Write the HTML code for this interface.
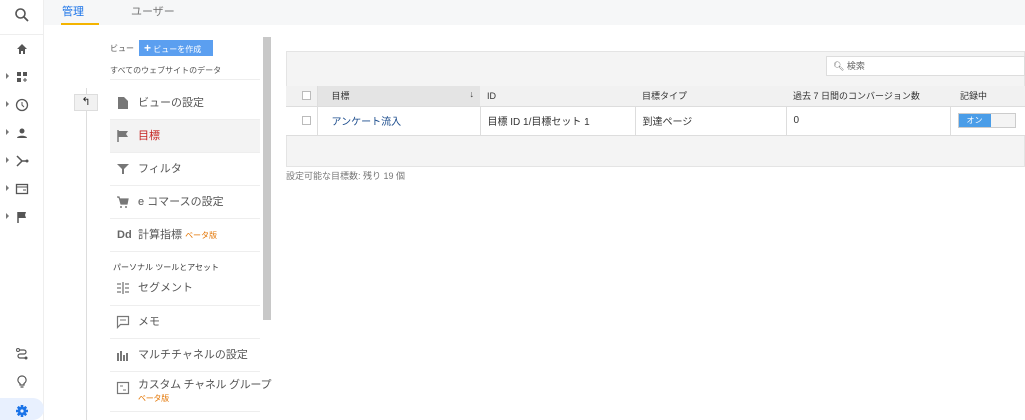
<!DOCTYPE html>
<html><head><meta charset="utf-8"><style>
*{margin:0;padding:0;box-sizing:border-box}
body{width:1025px;height:420px;overflow:hidden;background:#fff;font-family:"Liberation Sans","Noto Sans CJK JP",sans-serif;position:relative;color:#333}
.a{position:absolute}
.side{left:0;top:0;width:44px;height:420px;background:#fff;border-right:1px solid #eee}
.ic{position:absolute;left:14px;width:16px;height:16px}
.tri{position:absolute;left:6px;width:0;height:0;border-left:3px solid #777;border-top:3px solid transparent;border-bottom:3px solid transparent}
.tabs{left:44px;top:0;width:981px;height:25px;background:#f6f7f8}
.nav .it{position:absolute;left:110px;width:150px;height:33px;border-bottom:1px solid #eee;font-size:11px;color:#555;line-height:33px;padding-left:28px;white-space:nowrap}
.nav .it svg{position:absolute;left:6px;top:9px}
.beta{color:#e37400;font-size:8px}
table{border-collapse:collapse;font-size:9px;table-layout:fixed}
td{vertical-align:middle}
</style></head><body>
<div class="a side">
<svg class="ic" style="top:7px" viewBox="0 0 16 16"><circle cx="6.5" cy="6.5" r="4.5" fill="none" stroke="#555" stroke-width="1.6"/><path d="M10 10l4 4" stroke="#555" stroke-width="1.8"/></svg>
<div class="a" style="left:0;top:34px;width:44px;border-top:1px solid #eee"></div>
<svg class="ic" style="top:41px" viewBox="0 0 16 16"><path d="M3 8l5-5 5 5h-2v5H9v-3H7v3H5V8z" fill="#555"/></svg>
<div class="tri" style="top:73px"></div><svg class="ic" style="top:69px" viewBox="0 0 16 16"><rect x="3" y="3" width="4" height="4" fill="#555"/><rect x="9" y="3" width="4" height="4" fill="#555"/><rect x="3" y="9" width="4" height="4" fill="#555"/><path d="M9 11h4M11 9v4" stroke="#555"/></svg>
<div class="tri" style="top:101px"></div><svg class="ic" style="top:97px" viewBox="0 0 16 16"><circle cx="8" cy="8" r="5.5" fill="none" stroke="#555" stroke-width="1.3"/><path d="M8 5v3l2 2" stroke="#555" fill="none"/></svg>
<div class="tri" style="top:129px"></div><svg class="ic" style="top:125px" viewBox="0 0 16 16"><circle cx="8" cy="6" r="2.5" fill="#555"/><path d="M3 13c0-3 10-3 10 0z" fill="#555"/></svg>
<div class="tri" style="top:157px"></div><svg class="ic" style="top:153px" viewBox="0 0 16 16"><path d="M3 3l5 5-5 5M8 8h5" stroke="#555" stroke-width="1.5" fill="none"/><circle cx="13" cy="8" r="1.5" fill="#555"/></svg>
<div class="tri" style="top:185px"></div><svg class="ic" style="top:181px" viewBox="0 0 16 16"><rect x="2.5" y="3.5" width="11" height="9" fill="none" stroke="#555" stroke-width="1.3"/><path d="M2.5 6h11M9 9h3" stroke="#555"/></svg>
<div class="tri" style="top:213px"></div><svg class="ic" style="top:209px" viewBox="0 0 16 16"><path d="M4 3v11" stroke="#555" stroke-width="1.5"/><path d="M4 3h8l-1 3 1 3H4z" fill="#555"/></svg>
<svg class="ic" style="top:346px" viewBox="0 0 16 16"><circle cx="4" cy="4" r="1.5" fill="none" stroke="#555"/><circle cx="12" cy="12" r="1.5" fill="#555"/><path d="M5 4h5a2 2 0 0 1 0 4H6a2 2 0 0 0 0 4h5" stroke="#555" fill="none" stroke-width="1.2"/></svg>
<svg class="ic" style="top:374px" viewBox="0 0 16 16"><path d="M8 2a4 4 0 0 0-2 7.5V11h4V9.5A4 4 0 0 0 8 2zM6.5 13h3" stroke="#555" fill="none" stroke-width="1.2"/></svg>
<div class="a" style="left:0;top:398px;width:44px;height:22px;background:#e8f0fe;border-radius:0 11px 11px 0"></div>
<svg class="ic" style="top:403px" viewBox="0 0 16 16"><g stroke="#1a73e8" stroke-width="2.6"><path d="M8 2v12M2 8h12M3.8 3.8l8.4 8.4M12.2 3.8l-8.4 8.4"/></g><circle cx="8" cy="8" r="4.2" fill="#1a73e8"/><circle cx="8" cy="8" r="1.6" fill="#e8f0fe"/></svg>
</div>
<div class="a tabs">
<div class="a" style="left:18px;top:3px;font-size:11px;color:#1a73e8">管理</div>
<div class="a" style="left:87px;top:3px;font-size:11px;color:#777">ユーザー</div>
<div class="a" style="left:17px;top:23px;width:38px;height:2px;background:#f4b400"></div>
</div>
<div class="nav">
<div class="a" style="left:110px;top:43px;font-size:8px;color:#555">ビュー</div>
<div class="a" style="left:139px;top:40px;width:74px;height:16px;background:#5b9ff0;color:#fff;font-size:8px;line-height:16px;padding-left:5px"><b style="font-size:12px">+</b> ビューを作成</div>
<div class="a" style="left:110px;top:65px;font-size:8px;color:#555">すべてのウェブサイトのデータ</div>
<div class="a" style="left:110px;top:79px;width:150px;border-top:1px solid #eee"></div>
<div class="a" style="left:86px;top:88px;height:332px;border-left:1px solid #ddd"></div>
<div class="a" style="left:74px;top:94px;width:24px;height:17px;background:#f1f1f1;border:1px solid #ddd;font-size:11px;text-align:center;line-height:14px;color:#222">↰</div>
<div class="a" style="left:263px;top:37px;width:8px;height:283px;background:#c8c8c8"></div>
<div class="it" style="top:87px">ビューの設定<svg width="14" height="14" viewBox="0 0 14 14"><path d="M2 1h6l4 4v8H2z" fill="#777"/></svg></div>
<div class="it" style="top:120px;background:#f3f3f3;color:#c5221f">目標<svg width="14" height="14" viewBox="0 0 14 14"><path d="M2 1v12" stroke="#777" stroke-width="1.5"/><path d="M2 2h10l-2 3 2 3H2z" fill="#777"/></svg></div>
<div class="it" style="top:153px">フィルタ<svg width="14" height="14" viewBox="0 0 14 14"><path d="M1 2h12L8 7v5H6V7z" fill="#777"/></svg></div>
<div class="it" style="top:186px">e コマースの設定<svg width="14" height="14" viewBox="0 0 14 14"><path d="M1 2h2l2 7h6l1-5H4" stroke="#777" fill="#777" stroke-width="1.2"/><circle cx="5" cy="12" r="1" fill="#777"/><circle cx="10" cy="12" r="1" fill="#777"/></svg></div>
<div class="it" style="top:219px">計算指標 <span class="beta">ベータ版</span><span style="position:absolute;left:7px;font-weight:bold;color:#666;font-size:11px">Dd</span></div>
<div class="a" style="left:113px;top:262px;font-size:8px;color:#333">パーソナル ツールとアセット</div>
<div class="it" style="top:272px;height:34px">セグメント<svg width="14" height="14" viewBox="0 0 14 14"><path d="M1 3h4M1 7h4M1 11h4M9 3h4M9 7h4M9 11h4M7 1v12" stroke="#777" stroke-width="1.3"/></svg></div>
<div class="it" style="top:306px">メモ<svg width="14" height="14" viewBox="0 0 14 14"><path d="M1.5 1.5h11v8h-8l-3 3z" fill="none" stroke="#777" stroke-width="1.2"/><path d="M4 5h6" stroke="#777"/></svg></div>
<div class="it" style="top:339px">マルチチャネルの設定<svg width="14" height="14" viewBox="0 0 14 14"><path d="M2 5v8M5 3v10M8 7v6M11 5v8" stroke="#777" stroke-width="2"/></svg></div>
<div class="it" style="top:372px;height:40px;line-height:13px;padding-top:7px;letter-spacing:-0.3px">カスタム チャネル グループ<br><span class="beta">ベータ版</span><svg width="14" height="14" viewBox="0 0 14 14"><rect x="1.5" y="1.5" width="11" height="11" fill="none" stroke="#777" stroke-width="1.2"/><path d="M4 5h3M7 9h3" stroke="#777"/></svg></div>
</div>
<div class="a" style="left:286px;top:51px;width:739px;height:116px;background:#f4f4f4;border:1px solid #e4e4e4"></div>
<div class="a" style="left:826px;top:56px;width:199px;height:20px;background:#fff;border:1px solid #ddd;font-size:9px;color:#666;line-height:18px;padding-left:6px">🔍︎ 検索</div>
<table class="a" style="left:286px;top:86px;width:739px">
<colgroup><col style="width:31px"><col style="width:163px"><col style="width:155px"><col style="width:151px"><col style="width:164px"><col></colgroup>
<tr style="height:20px;background:#f1f1f1;color:#333;border-bottom:1px solid #ddd">
<td style="border-right:1px solid #ddd"><div style="width:9px;height:9px;border:1px solid #bbb;background:#fff;margin-left:16px"></div></td>
<td style="background:#e4e4e4;padding-left:14px">目標<span style="float:right;margin-right:6px">↓</span></td>
<td style="padding-left:7px">ID</td><td style="padding-left:7px">目標タイプ</td><td style="padding-left:7px">過去 7 日間のコンバージョン数</td><td style="padding-left:10px">記録中</td></tr>
<tr style="height:29px;background:#fff;font-size:10px;border-bottom:1px solid #ddd">
<td style="border-right:1px solid #ddd"><div style="width:9px;height:9px;border:1px solid #bbb;margin-left:16px"></div></td>
<td style="border-right:1px solid #ddd;padding-left:14px;color:#1a4b8c">アンケート流入</td>
<td style="border-right:1px solid #ddd;padding-left:7px">目標 ID 1/目標セット 1</td>
<td style="border-right:1px solid #ddd;padding-left:7px">到達ページ</td>
<td style="border-right:1px solid #ddd;padding-left:7px">0</td>
<td style="padding-left:7px"><div style="width:58px;height:15px;border:1px solid #ccc;background:#f4f4f4"><div style="width:32px;height:13px;background:#4a9de8;color:#fff;font-size:8px;text-align:center;line-height:13px">オン</div></div></td></tr>
</table>
<div class="a" style="left:286px;top:169px;font-size:9px;color:#777">設定可能な目標数: 残り 19 個</div>
</body></html>
